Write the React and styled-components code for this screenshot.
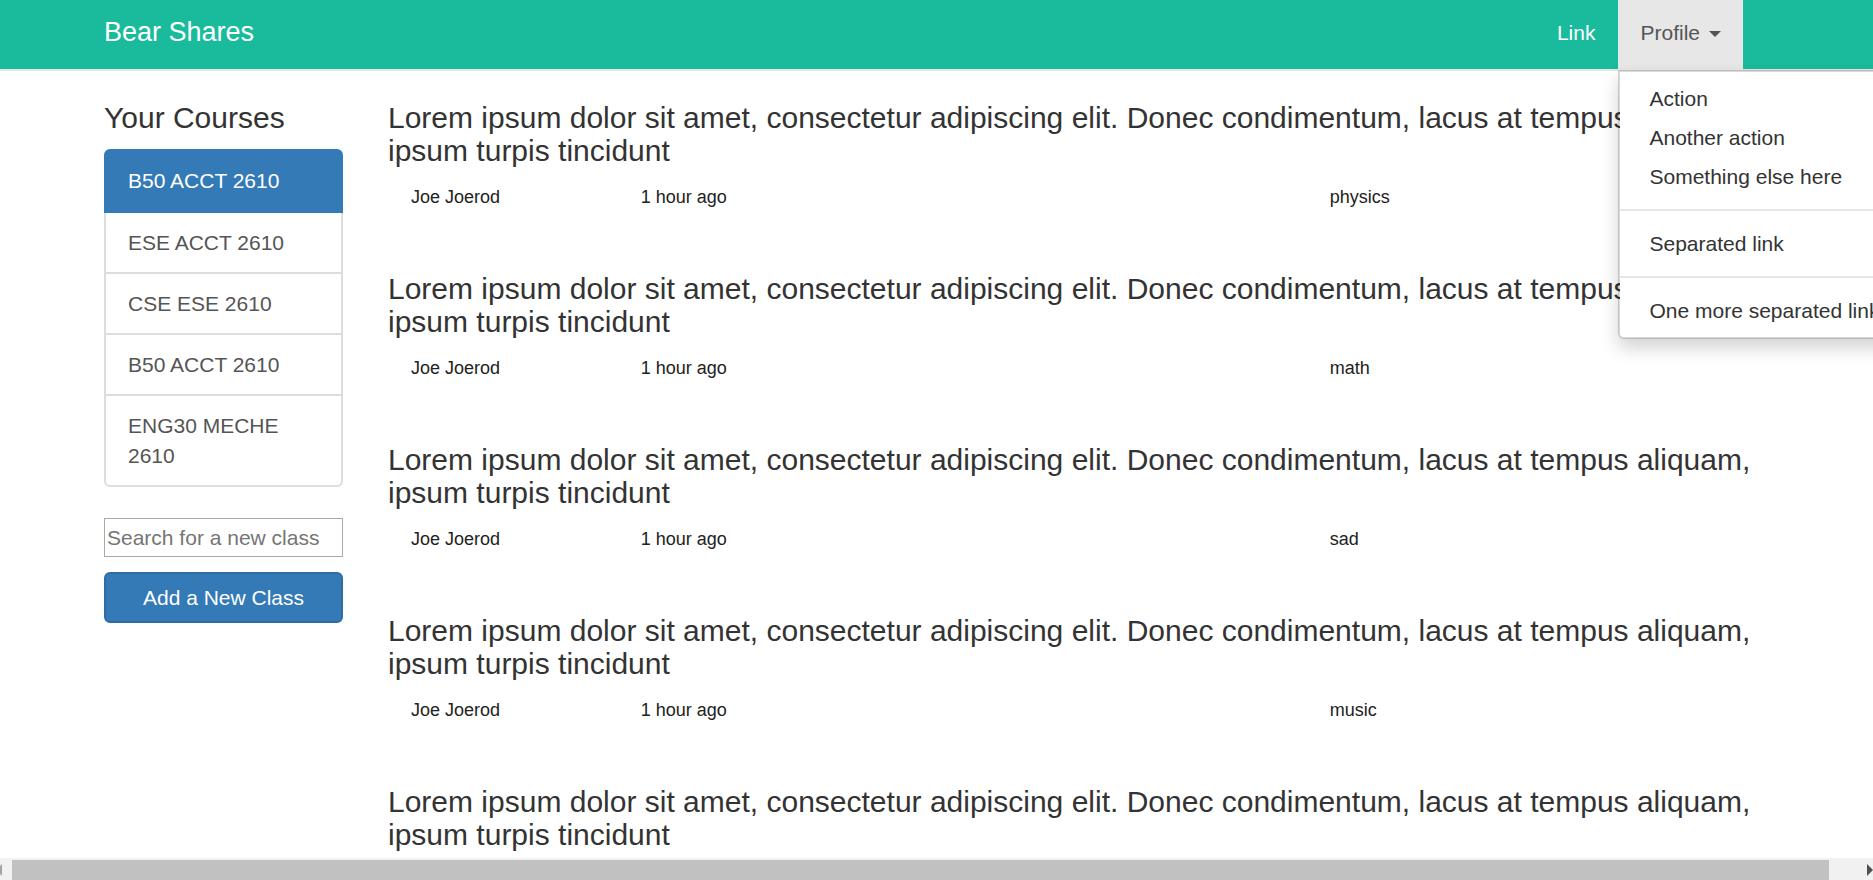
import React from 'react';
import styled, { createGlobalStyle, css } from 'styled-components';

const GlobalStyle = createGlobalStyle`
  *, *::before, *::after { box-sizing: border-box; }
  body {
    margin: 0;
    background: #fff;
    color: #333;
    font-family: "Liberation Sans", Arial, sans-serif;
    font-size: 21px;
    line-height: 30px;
  }
  a { color: inherit; text-decoration: none; }
  button, input { font: inherit; }
`;

const Shell = styled.div`
  display: flex;
  flex-direction: column;
  height: 100vh;
  overflow: hidden;
`;

const gutters = css`
  padding-left: 104px;
  padding-right: 107px;
`;

const Navbar = styled.header`
  ${gutters}
  flex: none;
  display: flex;
  justify-content: space-between;
  height: 71px;
  background: #1abb9c;
  border-bottom: 2px solid #e7e7e7;
  color: #fff;
`;

const Brand = styled.a`
  padding: 17px 0;
  font-size: 27px;
`;

const NavList = styled.ul`
  display: flex;
  margin: 0 23px 0 0;
  padding: 0;
  list-style: none;
`;

const NavItem = styled.li`
  position: relative;
`;

const NavLink = styled.a`
  display: block;
  padding: 18px 23px 21px;
`;

const NavToggle = styled.button`
  display: flex;
  align-items: center;
  gap: 9px;
  height: 70px;
  padding: 0 22px 4px;
  border: 0;
  background: #e7e7e7;
  color: #555;
  cursor: pointer;
`;

const Caret = styled.span`
  margin-top: 2px;
  border-top: 6px solid currentColor;
  border-left: 6px solid transparent;
  border-right: 6px solid transparent;
`;

const Menu = styled.ul`
  position: absolute;
  top: 100%;
  left: 0;
  z-index: 10;
  margin: 1px 0 0;
  padding: 7px 0;
  list-style: none;
  background: #fff;
  background-clip: padding-box;
  border: 2px solid rgba(0, 0, 0, 0.15);
  border-radius: 0 0 6px 6px;
  box-shadow: 0 9px 18px rgba(0, 0, 0, 0.175);
  color: #333;
  white-space: nowrap;
`;

const MenuLink = styled.a`
  display: block;
  padding: 5px 29px 4px;
`;

const Divider = styled.li`
  height: 2px;
  margin: 13px 0;
  background: #e5e5e5;
`;

const Page = styled.div`
  ${gutters}
  flex: 1;
  min-height: 0;
  overflow: hidden;
  display: flex;
  gap: 45px;
  padding-top: 30px;
`;

const Sidebar = styled.aside`
  flex: 0 0 239px;
  display: flex;
  flex-direction: column;
`;

const headingText = css`
  margin: 0 0 15px;
  font-size: 30px;
  font-weight: 400;
  line-height: 33px;
`;

const SidebarTitle = styled.h2`
  ${headingText}
`;

const CourseList = styled.nav`
  display: flex;
  flex-direction: column;
  margin-bottom: 31px;
`;

const CourseLink = styled.a`
  position: relative;
  padding: 15px 22px ${(p) => (p.$active ? 15 : 14)}px;
  border: 2px solid ${(p) => (p.$active ? '#337ab7' : '#ddd')};
  background: ${(p) => (p.$active ? '#337ab7' : '#fff')};
  color: ${(p) => (p.$active ? '#fff' : '#555')};
  z-index: ${(p) => (p.$active ? 1 : 0)};

  & + & { margin-top: -2px; }
  &:first-child { border-radius: 6px 6px 0 0; }
  &:last-child { border-radius: 0 0 6px 6px; }
`;

const SearchForm = styled.form`
  display: flex;
  flex-direction: column;
  gap: 15px;
`;

const SearchInput = styled.input`
  width: 100%;
  height: 39px;
  padding: 0 2px;
  border: 1px solid #a9a9a9;
  border-radius: 0;
  background: #fff;
  color: #333;

  &::placeholder { color: #757575; opacity: 1; }
`;

const AddButton = styled.button`
  height: 51px;
  padding: 0;
  border: 2px solid #2e6da4;
  border-radius: 6px;
  background: #337ab7;
  color: #fff;
  cursor: pointer;
`;

const Feed = styled.main`
  flex: 1;
  min-width: 0;
`;

const Post = styled.article`
  margin-bottom: 60px;
`;

const PostTitle = styled.h3`
  ${headingText}
`;

const PostMeta = styled.div`
  display: grid;
  grid-template-columns: 2fr 6fr 4fr;
  padding-top: 1px;
  font-size: 18px;
  line-height: 29px;
  color: #222;
`;

const MetaCell = styled.span`
  padding: 0 23px;
`;

const ScrollTrack = styled.div`
  flex: none;
  display: flex;
  align-items: center;
  justify-content: space-between;
  height: 22px;
  padding-top: 2px;
  background: #f1f1f1;
`;

const ScrollThumb = styled.div`
  flex: 1;
  align-self: stretch;
  margin: 0 38px 0 10px;
  background: #c1c1c1;
`;

const ScrollArrow = styled.svg`
  flex: none;
  display: block;
`;

const COURSES = ['B50 ACCT 2610', 'ESE ACCT 2610', 'CSE ESE 2610', 'B50 ACCT 2610', 'ENG30 MECHE 2610'];
const TITLE =
  'Lorem ipsum dolor sit amet, consectetur adipiscing elit. Donec condimentum, lacus at tempus aliquam, ipsum turpis tincidunt';
const POSTS = ['physics', 'math', 'sad', 'music', ''];
const MENU = [['Action', 'Another action', 'Something else here'], ['Separated link'], ['One more separated link']];

export default function App() {
  return (
    <Shell>
      <GlobalStyle />
      <Navbar>
        <Brand href="#">Bear Shares</Brand>
        <NavList>
          <NavItem>
            <NavLink href="#">Link</NavLink>
          </NavItem>
          <NavItem>
            <NavToggle type="button" aria-haspopup="true" aria-expanded="true">
              Profile
              <Caret />
            </NavToggle>
            <Menu>
              {MENU.map((group, g) => (
                <React.Fragment key={g}>
                  {g > 0 && <Divider role="separator" />}
                  {group.map((label) => (
                    <li key={label}>
                      <MenuLink href="#">{label}</MenuLink>
                    </li>
                  ))}
                </React.Fragment>
              ))}
            </Menu>
          </NavItem>
        </NavList>
      </Navbar>

      <Page>
        <Sidebar>
          <SidebarTitle>Your Courses</SidebarTitle>
          <CourseList aria-label="Your courses">
            {COURSES.map((course, i) => (
              <CourseLink key={i} href="#" $active={i === 0}>
                {course}
              </CourseLink>
            ))}
          </CourseList>
          <SearchForm onSubmit={(e) => e.preventDefault()}>
            <SearchInput type="text" aria-label="Search for a new class" placeholder="Search for a new class" />
            <AddButton type="submit">Add a New Class</AddButton>
          </SearchForm>
        </Sidebar>

        <Feed>
          {POSTS.map((subject, i) => (
            <Post key={i}>
              <PostTitle>{TITLE}</PostTitle>
              {subject && (
                <PostMeta>
                  <MetaCell>Joe Joerod</MetaCell>
                  <MetaCell>1 hour ago</MetaCell>
                  <MetaCell>{subject}</MetaCell>
                </PostMeta>
              )}
            </Post>
          ))}
        </Feed>
      </Page>

      <ScrollTrack aria-hidden="true">
        <ScrollArrow width="2" height="12" viewBox="0 0 2 12">
          <path d="M2 0V12L0 10V2Z" fill="#a3a3a3" />
        </ScrollArrow>
        <ScrollThumb />
        <ScrollArrow width="6" height="12" viewBox="0 0 6 12">
          <path d="M0 0L6 6L0 12Z" fill="#505050" />
        </ScrollArrow>
      </ScrollTrack>
    </Shell>
  );
}
